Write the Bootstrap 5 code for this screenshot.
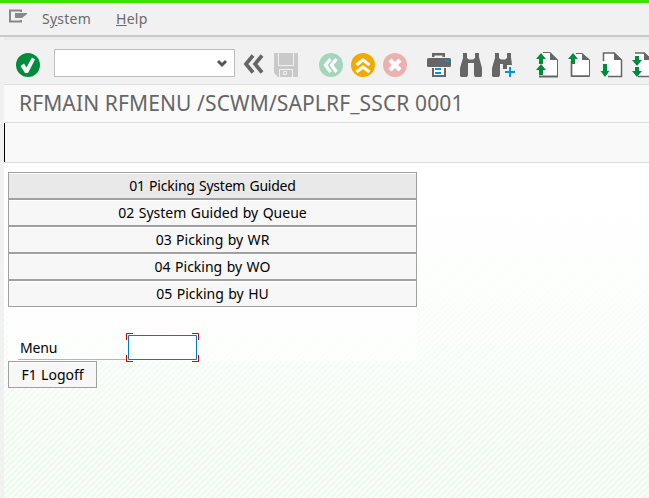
<!DOCTYPE html>
<html lang="en">
<head>
<meta charset="utf-8">
<meta name="viewport" content="width=device-width, initial-scale=1">
<title>RFMAIN RFMENU</title>
<link href="https://cdn.jsdelivr.net/npm/bootstrap@5.3.0/dist/css/bootstrap.min.css" rel="stylesheet">
<style>
body{width:649px;height:498px;overflow:hidden;background:#f1f1f1;font:14px/18px "Noto Sans",sans-serif;color:#000}
.menu-strip{height:37px;border-top:3px solid #3be300;border-bottom:2px solid #c9c9c9;padding-left:8px}
.menu-strip a{color:#6a6a6a;text-decoration:none;line-height:31px;letter-spacing:.25px}
.menu-strip .first{margin:0 25px 0 14px}
.tools{height:47px;margin-left:4px;border-top:3px solid #eaeaea}
.tools svg{display:block}
.title-line{height:39px;margin-left:4px;border-top:1px solid #ddd;border-bottom:1px solid #ddd;background:#fafafa;padding-left:15px;color:#666;font-size:21px;line-height:36px;font-weight:400;letter-spacing:.12px}
.app-strip{height:39px;margin-left:4px;border-left:1px solid #000;background:#f9f9f9}
.work{margin-left:4px;height:337px;border-top:1px solid #ddd;padding:9px 0 0 4px;
 background:linear-gradient(#fff 0,rgba(255,255,255,.82) 110px,rgba(255,255,255,0) 290px),repeating-linear-gradient(135deg,#effaef 0 2.1px,#fff 3px 3.5px,#effaef 4.2426px)}
.panel{width:409px;height:189px;background:rgba(255,255,255,.65)}
.key{display:block;width:100%;height:27px;padding:0;border:1px solid #a0a0a0;border-radius:0;background:#f7f7f7;box-shadow:inset 0 1px #fff;text-align:center;font-size:14px;line-height:25px;color:#000;word-spacing:.8px}
.key.current{background:#e9e9e9;letter-spacing:-.22px}
.entry{height:29px;margin-top:26px;padding-left:10px}
.entry label{width:108px;height:27px;border-bottom:1px solid #b5b5b5;line-height:29px;padding-left:2px;letter-spacing:-.2px}
.slot{width:74px;height:30px;flex:none}
.logoff{width:89px}
</style>
<script src="https://cdn.jsdelivr.net/npm/bootstrap@5.3.0/dist/js/bootstrap.bundle.min.js"></script>
</head>
<body>
<nav class="menu-strip d-flex">
<svg width="20" height="20" class="mt-1"><path d="M13 5V3.500H2V14.500H13V13" fill="none" stroke="#888" stroke-width="2"/><path d="M7 6H19V7L14 11H7Z" fill="#888"/></svg>
<a class="first" href="#">S<u>y</u>stem</a><a href="#"><u>H</u>elp</a>
</nav>
<div class="tools">
<svg width="645" height="44" viewBox="4 40 645 44" role="img" aria-label="Toolbar">
<circle cx="28" cy="65" r="12" fill="#008c3c"/><path d="M20.500 66 24 63.500 26.500 67.500 32 57.500 35 59.500 28 73H25Z" fill="#fff"/>
<path d="M54.500 49.500H234.500V76.500H54.500Z" fill="#fff" stroke="#bdbdbd"/><path d="m218 61 4 4 4-4" fill="none" stroke="#555" stroke-width="3"/>
<path d="m253 55.500-7 8.500 7 8.500m9-17-7 8.500 7 8.500" fill="none" stroke="#666" stroke-width="3.700"/>
<path d="M274 53H298V77H278L274 73Z" fill="#c9c9c9"/><path d="M278.500 53V65.500H293.500V53M279.500 77V69.500H292.500V77" fill="none" stroke="#f1f1f1"/><path d="M283.500 71.500H286.500V74.500H283.500Z" fill="none" stroke="#f1f1f1"/>
<circle cx="331" cy="65" r="12" fill="#a5d5ba"/><path d="m330.500 59-5 6 5 7m6-13-5 6 5 7" fill="none" stroke="#fff" stroke-width="3.300"/>
<circle cx="363" cy="65" r="12" fill="#f2a900"/><path d="m356.500 65 6.500-5 6.500 5m-13 7 6.500-5 6.500 5" fill="none" stroke="#fff" stroke-width="3.200"/>
<circle cx="395" cy="65" r="12" fill="#ebb0b0"/><path d="m390 60 10 10m0-10-10 10" fill="none" stroke="#fff" stroke-width="4.300"/>
<g fill="#666"><path d="M432 57V53H445V57H442.500V55.500H434.500V57Z"/><rect x="427" y="58" width="24" height="9" rx="1.500"/><path d="M432 68H446V77H432Z"/></g><path d="M434 67H444V75H434Z" fill="#fff"/><path d="M445 60H449V62H445ZM435 68H441V70H435ZM435 72H441V74H435Z" fill="#0098db"/>
<g fill="#666"><path d="M463 53H467V58L469 59.500H473L475 58V53H479V57L482 68V76L481 77H475L474 75V63H468V75L467 77H461L460 76V68L463 58Z"/><path d="M495 53H499V58L501 59.500H505L507 58V53H511V57L512 65H507V69H503V64H500V75L499 77H493L492 76V68L495 58Z"/></g>
<path d="M510 67V77M505 72H515" stroke="#0098db" stroke-width="2"/>
<path d="M543 52.500H550L557.500 60V76.500H539V55" fill="#fff"/><path d="M543 52.500H550L557.500 60V76.500H539" fill="none" stroke="#666"/><path d="M539 76.500H558" stroke="#666" stroke-width="2"/><path d="M550 52V60H558Z" fill="#666"/>
<path d="M541 53 546 59H543V64H539V59H536ZM541 64 546 70H543V75H539V70H536Z" fill="#008c3c"/>
<path d="M576 53.500H582L589.500 60V76.500H571.500V62" fill="#fff" stroke="#666"/><path d="M571.500 61V76H589" fill="none" stroke="#666" stroke-width="1.700"/><path d="M582 53V60H590Z" fill="#666"/><path d="M573 53 578 59H575V64H571V59H568Z" fill="#008c3c"/>
<path d="M603.500 61V53H614L621.500 60V76.500H608" fill="#fff" stroke="#666" stroke-width="1.500"/><path d="M614 52V60H622Z" fill="#666"/><path d="M603 64H607V71H609.500L605 77 600.500 71H603Z" fill="#008c3c"/>
<path d="M635 53H644L652 60V76.500H638" fill="#fff" stroke="#666" stroke-width="1.500"/><path d="M644 52V60H652Z" fill="#666"/><path d="M635 56H639V60H642L637 66 632 60H635ZM635 67H639V71H642L637 77 632 71H635Z" fill="#008c3c"/>
</svg></div>
<h1 class="title-line mb-0">RFMAIN RFMENU /SCWM/SAPLRF_SSCR 0001</h1>
<div class="app-strip"></div>
<main class="work">
<div class="panel">
<button class="btn key current">01 Picking System Guided</button><button class="btn key">02 System Guided by Queue</button><button class="btn key">03 Picking by WR</button><button class="btn key">04 Picking by WO</button><button class="btn key">05 Picking by HU</button>
<div class="entry d-flex"><label>Menu</label>
<svg class="slot" viewBox="126 333 74 30"><path d="M128.500 335.500H196.500V359.500H128.500Z" fill="#fff" stroke="#007cc0"/><path d="M126.500 340V333.500H133M192 333.500H198.500V340M126.500 355V361.500H133M192 361.500H198.500V355" fill="none" stroke="#d90000"/></svg>
</div></div>
<button class="btn key logoff">F1 Logoff</button>
</main>
</body>
</html>
